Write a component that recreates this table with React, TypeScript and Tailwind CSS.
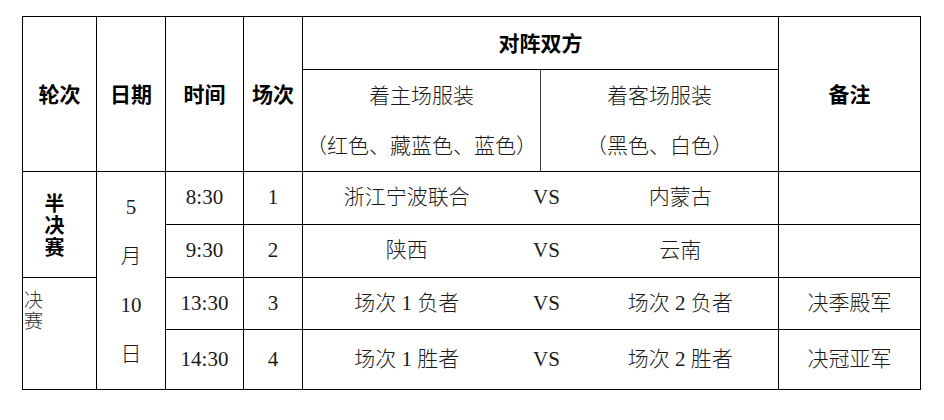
import React from "react";

const serif = { fontFamily: '"Liberation Serif", "Noto Sans CJK SC", serif' };
const bold = { fontFamily: '"Noto Sans CJK SC", "Liberation Sans", sans-serif' };

const rows = [
  { time: "8:30", n: "1", home: "浙江宁波联合", away: "内蒙古", note: "", h: "h-[53px]" },
  { time: "9:30", n: "2", home: "陕西", away: "云南", note: "", h: "h-[53px]" },
  { time: "13:30", n: "3", home: "场次 1 负者", away: "场次 2 负者", note: "决季殿军", h: "h-[52px]" },
  { time: "14:30", n: "4", home: "场次 1 胜者", away: "场次 2 胜者", note: "决冠亚军", h: "h-[60px]" },
];

export default function App() {
  const b = "border border-black";
  return (
    <div className="w-[944px] h-[420px] bg-white pt-[16px] pl-[22px]">
      <table className="table-fixed border-collapse text-[21px] text-[#1a1a1a] w-[898px]" style={serif}>
        <colgroup>
          <col className="w-[74px]" />
          <col className="w-[69px]" />
          <col className="w-[78px]" />
          <col className="w-[59px]" />
          <col className="w-[208px]" />
          <col className="w-[30px]" />
          <col className="w-[42px]" />
          <col className="w-[196px]" />
          <col className="w-[142px]" />
        </colgroup>
        <tbody>
          <tr className="h-[53px]">
            <td rowSpan={2} className={`${b} text-center font-bold text-black`} style={bold}>轮次</td>
            <td rowSpan={2} className={`${b} text-center font-bold text-black`} style={bold}>日期</td>
            <td rowSpan={2} className={`${b} text-center font-bold text-black`} style={bold}>时间</td>
            <td rowSpan={2} className={`${b} text-center font-bold text-black`} style={bold}>场次</td>
            <td colSpan={4} className={`${b} text-center font-bold text-black`} style={bold}>对阵双方</td>
            <td rowSpan={2} className={`${b} text-center font-bold text-black`} style={bold}>备注</td>
          </tr>
          <tr className="h-[102px]">
            <td colSpan={2} className={`${b} border-r-[#444] text-center font-light leading-[50px]`}>
              <div>着主场服装</div>
              <div>（红色、藏蓝色、蓝色）</div>
            </td>
            <td colSpan={2} className={`${b} text-center font-light leading-[50px]`}>
              <div>着客场服装</div>
              <div>（黑色、白色）</div>
            </td>
          </tr>
          {rows.map((r, i) => (
            <tr key={i} className={r.h}>
              {i === 0 && (
                <td rowSpan={2} className={`${b} text-center align-middle pr-[10px]`}>
                  <div className="font-bold text-black text-[20px] leading-[22px]" style={bold}>
                    <div>半</div>
                    <div>决</div>
                    <div>赛</div>
                  </div>
                </td>
              )}
              {i === 2 && (
                <td rowSpan={2} className={`${b} align-top pt-[12px] pl-[1px]`}>
                  <div className="text-[19px] leading-[21px] text-[#333] font-light">
                    <div>决</div>
                    <div>赛</div>
                  </div>
                </td>
              )}
              {i === 0 && (
                <td rowSpan={4} className={`${b} text-center leading-[49px] font-light`}>
                  <div>5</div>
                  <div>月</div>
                  <div>10</div>
                  <div>日</div>
                </td>
              )}
              <td className={`${b} text-center`}>{r.time}</td>
              <td className={`${b} border-l-[#444] text-center`}>{r.n}</td>
              <td className={`${b} border-l-[#444] border-r-0 text-center font-light`}>{r.home}</td>
              <td colSpan={2} className={`${b} border-x-0 text-center`}>VS</td>
              <td className={`${b} border-l-0 text-center font-light`}>{r.away}</td>
              <td className={`${b} text-center font-light`}>{r.note}</td>
            </tr>
          ))}
        </tbody>
      </table>
    </div>
  );
}
